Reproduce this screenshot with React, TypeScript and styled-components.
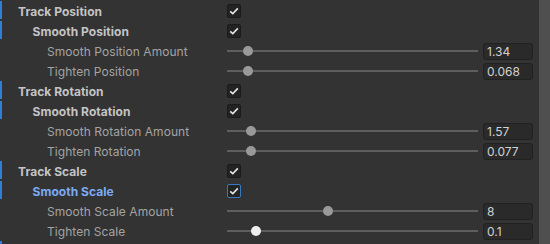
import { createGlobalStyle, css, styled } from "styled-components";

const GlobalStyle = createGlobalStyle`
  html, body {
    margin: 0;
    padding: 0;
    background: #333333;
    overflow: hidden;
  }
  body {
    font-family: Inter, "Noto Sans", sans-serif;
    font-size: 12px;
  }
`;

type RowDef =
  | { kind: "toggle"; label: string; level: number; focused?: boolean }
  | { kind: "slider"; label: string; level: number; value: string; frac: number }
  | { kind: "blank"; level: number };

const rows: RowDef[] = [
  { kind: "toggle", label: "Track Position", level: 0 },
  { kind: "toggle", label: "Smooth Position", level: 1 },
  { kind: "slider", label: "Smooth Position Amount", level: 2, value: "1.34", frac: 1.34 / 20 },
  { kind: "slider", label: "Tighten Position", level: 2, value: "0.068", frac: 0.068 },
  { kind: "toggle", label: "Track Rotation", level: 0 },
  { kind: "toggle", label: "Smooth Rotation", level: 1 },
  { kind: "slider", label: "Smooth Rotation Amount", level: 2, value: "1.57", frac: 1.57 / 20 },
  { kind: "slider", label: "Tighten Rotation", level: 2, value: "0.077", frac: 0.077 },
  { kind: "toggle", label: "Track Scale", level: 0 },
  { kind: "toggle", label: "Smooth Scale", level: 1, focused: true },
  { kind: "slider", label: "Smooth Scale Amount", level: 2, value: "8", frac: 8 / 20 },
  { kind: "slider", label: "Tighten Scale", level: 2, value: "0.1", frac: 0.1 },
  { kind: "blank", level: 0 },
];

const App = () => {
  return (
    <>
      <GlobalStyle />
      <Inspector>
        <Fields>
          {rows.map((row, i) => (
            <Field key={i} $override={row.level < 2}>
              <Label
                $level={row.level}
                $bold={row.level < 2}
                $focused={row.kind === "toggle" && !!row.focused}
              >
                {row.kind !== "blank" && row.label}
              </Label>
              {row.kind === "toggle" && (
                <Checkbox $focused={!!row.focused}>
                  <svg width="10" height="8" viewBox="0 0 10 8">
                    <path
                      d="M1.2 4.3 L3.8 6.6 L8.8 1.4"
                      fill="none"
                      stroke="#e4e4e4"
                      strokeWidth="1.6"
                    />
                  </svg>
                </Checkbox>
              )}
              {row.kind === "slider" && (
                <SliderGroup>
                  <Track>
                    <Thumb
                      $hot={row.label === "Tighten Scale"}
                      style={{ left: `calc(${row.frac} * (100% - 10px))` }}
                    />
                  </Track>
                  <NumberField>{row.value}</NumberField>
                </SliderGroup>
              )}
            </Field>
          ))}
        </Fields>
        <ScrollGutter />
      </Inspector>
    </>
  );
};

export default App;

const Inspector = styled.div`
  display: flex;
  width: 550px;
  height: 244px;
  overflow: hidden;
  background: #333333;
`;

const Fields = styled.div`
  flex: 1;
  display: flex;
  flex-direction: column;
  padding-top: 1px;
  padding-right: 6px;
`;

const ScrollGutter = styled.div`
  width: 11px;
  background: #4f4f4f;
`;

const Field = styled.div<{ $override: boolean }>`
  position: relative;
  height: 20px;
  flex-shrink: 0;
  display: flex;
  align-items: center;

  ${(p) =>
    p.$override &&
    css`
      &::before {
        content: "";
        position: absolute;
        left: 0;
        top: 0;
        bottom: 2px;
        width: 2px;
        background: #2f7fd6;
      }
    `}
`;

const Label = styled.div<{ $level: number; $bold: boolean; $focused: boolean }>`
  width: 227px;
  flex-shrink: 0;
  box-sizing: border-box;
  padding-left: ${(p) => 18 + p.$level * 14.5}px;
  padding-top: 1px;
  font-weight: ${(p) => (p.$bold ? 700 : 400)};
  color: ${(p) => (p.$focused ? "#7caaf5" : p.$bold ? "#c4c4c4" : "#a3a3a3")};
  white-space: nowrap;
  line-height: 19px;
  letter-spacing: 0.05px;
`;

const Checkbox = styled.div<{ $focused: boolean }>`
  width: 14px;
  height: 14px;
  box-sizing: border-box;
  border-radius: 2px;
  background: #232323;
  border: 1px solid ${(p) => (p.$focused ? "#3a79bb" : "#1a1a1a")};
  display: flex;
  align-items: center;
  justify-content: center;
`;

const SliderGroup = styled.div`
  flex: 1;
  display: flex;
  align-items: center;
  gap: 5px;
`;

const Track = styled.div`
  position: relative;
  flex: 1;
  height: 2px;
  background: #5e5e5e;
`;

const Thumb = styled.div<{ $hot: boolean }>`
  position: absolute;
  top: -4px;
  width: 10px;
  height: 10px;
  border-radius: 50%;
  background: ${(p) => (p.$hot ? "#eeeeee" : "#999999")};
`;

const NumberField = styled.div`
  width: 50px;
  height: 17px;
  box-sizing: border-box;
  padding-left: 3px;
  border: 1px solid #212121;
  border-radius: 3px;
  background: #2a2a2a;
  color: #d2d2d2;
  line-height: 15px;
  font-size: 12px;
`;
